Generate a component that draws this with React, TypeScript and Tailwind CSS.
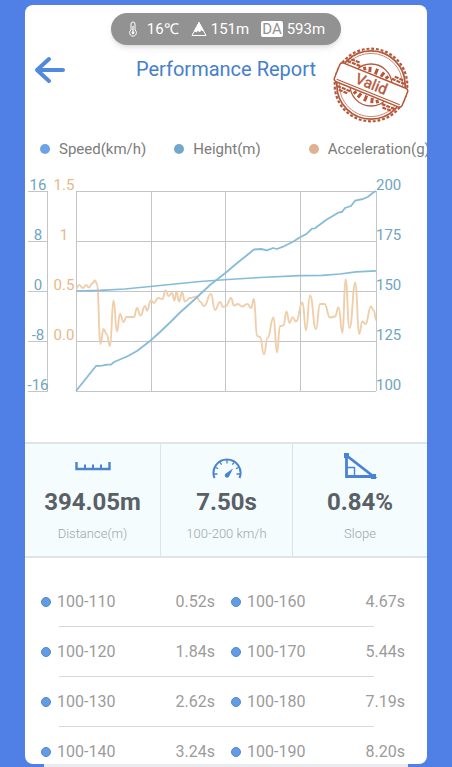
import { Fragment } from 'react';
import { clsx } from 'clsx';

type Point = [number, number];

const speed: Point[] = [
  [0, 200], [20, 175], [26, 174.7], [31, 173.7], [35, 173.7], [38, 171], [51, 165.5], [61, 160],
  [74, 150], [84, 141], [94, 131.5], [104, 121.5], [118, 109], [134, 94], [150, 81.5], [160, 73],
  [170, 65], [178, 58.5], [185, 58], [191, 59.3], [197, 57], [201, 58], [207, 55.7], [217, 50.7],
  [224, 46.3], [230, 43.3], [236, 37.7], [239, 37.3], [250, 29], [263, 21.3], [266, 21], [269, 17],
  [275, 15], [279, 9.7], [287, 8], [292, 5.7], [297, 1.7], [300, 0]
];

const height: Point[] = [
  [0, 100], [24, 99.3], [49, 98], [74, 95.5], [99, 93], [124, 90.5], [152, 88.5], [184, 86.5],
  [224, 84.7], [246, 84.3], [264, 83], [280, 80.8], [300, 79.8]
];

const acceleration: Point[] = [
  [0, 98], [3, 94], [7, 97], [10, 94], [13, 96.5], [16, 92.5], [19, 89.5], [21, 93], [24.5, 153],
  [27.5, 138], [30.5, 143], [34, 155], [37.5, 109.5], [41, 140.5], [44, 123], [47.5, 131],
  [50.5, 126], [58, 126], [61, 117], [64.5, 124.5], [69, 115], [71, 119.5], [75, 109.5], [78, 112],
  [82, 107], [86.5, 108], [89.5, 99.5], [92.5, 105], [96, 102], [98.5, 109.5], [100.5, 100.5],
  [103, 110.5], [106, 101.5], [109, 110.5], [114, 107], [120.5, 105.5], [124, 110.5], [128, 115],
  [135, 103], [139, 119], [144, 111], [147, 116], [150, 115], [155, 107], [158, 114.5], [162, 113],
  [166, 115.5], [171.5, 113], [175, 117], [178, 108], [181, 145], [184, 146], [188, 163.5],
  [191.5, 147], [197.5, 126.5], [201, 161.5], [204, 135], [207.5, 134.5], [210.5, 120.5],
  [213.5, 132], [216.5, 126.5], [220, 130.5], [226.5, 111.5], [230, 139.5], [234, 104.5],
  [240, 138], [244, 113], [248.5, 113], [254, 126.5], [259, 125.5], [262.5, 116.5], [266.5, 142],
  [269.5, 88.5], [273.5, 137], [279.5, 91.5], [283, 143], [286.5, 130.5], [289.5, 133],
  [295, 115.5], [298, 120], [300, 129]
];

const toLine = (points: Point[]) => 'M' + points.map(p => p.join(',')).join('L');

// Flat tangents at every sample, so peaks stay on the measured value
const toCurve = (points: Point[]) =>
  points.reduce((path, [x, y], i) => {
    if (i === 0) return `M${x},${y}`;
    const [px, py] = points[i - 1];
    const mid = (px + x) / 2;
    return `${path}C${mid},${py} ${mid},${y} ${x},${y}`;
  }, '');

const rows = [0, 50, 100, 150, 200];
const columns = [0, 75, 149, 224, 300];
const heightLabels = ['16', '8', '0', '-8', '-16'];
const accelerationLabels = ['1.5', '1', '0.5', '0.0'];
const speedLabels = ['200', '175', '150', '125', '100'];

const legend = [
  { label: 'Speed(km/h)', dot: 'bg-[#6ba3e6]', gap: 'mr-7' },
  { label: 'Height(m)', dot: 'bg-[#72a9cb]', gap: 'mr-12' },
  { label: 'Acceleration(g)', dot: 'bg-[#e0b190]', gap: '' }
];

const splits = [
  [['100-110', '0.52s'], ['100-160', '4.67s']],
  [['100-120', '1.84s'], ['100-170', '5.44s']],
  [['100-130', '2.62s'], ['100-180', '7.19s']],
  [['100-140', '3.24s'], ['100-190', '8.20s']]
];

const ConditionsBar = () => (
  <div className="mx-auto flex h-8 w-fit items-center rounded-full bg-[#929292] px-4 text-[15px] text-white shadow-md">
    <svg viewBox="0 0 12 16" className="mr-2 h-4 w-3" fill="none" stroke="currentColor">
      <path d="M4 9V3a2 2 0 0 1 4 0v6a3.4 3.4 0 1 1-4 0Z" />
      <path d="M6 5v6" strokeWidth="1.2" />
      <circle cx="6" cy="11.8" r="1.4" fill="currentColor" stroke="none" />
    </svg>
    <span>16℃</span>
    <svg viewBox="0 0 16 16" className="mr-1 ml-3 size-4" fill="none" stroke="currentColor">
      <path d="M8 1.5 15 14.5H1Z" />
      <path d="M8 1.5 12.4 10 10 8.6 8.6 11 7 9 5.4 11 3.6 10Z" fill="currentColor" />
    </svg>
    <span>151m</span>
    <span className="mr-1 ml-3 rounded-xs bg-white px-px leading-4 text-[#929292]">DA</span>
    <span>593m</span>
  </div>
);

const ValidStamp = () => (
  <svg viewBox="-38 -38 76 76" className="size-[76px]" fill="none" stroke="#b5573a" role="img" aria-label="Valid">
    <circle r="36.3" strokeWidth="2.2" strokeDasharray="2.9 1.85" />
    <circle r="34.2" strokeWidth="1.7" />
    <circle r="31.6" strokeWidth="0.7" />
    <circle r="21" strokeWidth="1.3" />
    <g transform="rotate(22)">
      <path
        d="M-11-11.5l-2-3M-6-11.5l-1.5-5M0-11.5v-6M6-11.5l1.5-5M11-11.5l2-3M-11 11.5l-2 3M-6 11.5l-1.5 5M0 11.5v6M6 11.5l1.5 5M11 11.5l2 3"
        strokeWidth="3"
      />
      <path d="M-31-13.5h14M-28-16.5h9M17-13.5h14M19-16.5h9M-31 13.5h14M-28 16.5h9M17 13.5h14M19 16.5h9" strokeWidth="2.2" strokeDasharray="4 1" />
      <rect x="-36.5" y="-10" width="73" height="20" rx="3" fill="#fff" strokeWidth="1.5" />
      <path d="M-34 7.5h68" />
      <text y="4" textAnchor="middle" fill="#b5573a" strokeWidth="0.4" className="text-[15px]">
        Valid
      </text>
    </g>
  </svg>
);

const PerformanceChart = () => (
  <svg viewBox="-51 -21 402 250" className="mt-[9px] block w-full text-[15px]" fill="none">
    <g stroke="#c3c5c6">
      {rows.map(y => (
        <path key={y} d={`M0 ${y + 0.5}H300M-48 ${y + 0.5}H-29`} />
      ))}
      {columns.map(x => (
        <path key={x} d={`M${x + 0.5} 0V200`} />
      ))}
      <path d="M-28.5 0V201" />
    </g>
    <path d={toCurve(acceleration)} stroke="#efceaa" strokeWidth="1.9" />
    <path d={toLine(height)} stroke="#86bcd8" strokeWidth="1.7" />
    <path d={toLine(speed)} stroke="#86bcd8" strokeWidth="1.8" strokeLinejoin="round" />
    <g fill="#6fa5c0">
      {heightLabels.map((label, i) => (
        <text key={label} x="-38" y={rows[i] - 1} textAnchor="middle">{label}</text>
      ))}
      {speedLabels.map((label, i) => (
        <text key={label} x="300" y={rows[i] - 1}>{label}</text>
      ))}
    </g>
    <g fill="#ebb786">
      {accelerationLabels.map((label, i) => (
        <text key={label} x="-12" y={rows[i] - 1} textAnchor="middle">{label}</text>
      ))}
    </g>
  </svg>
);

const RulerIcon = () => (
  <svg viewBox="0 0 36 28" className="h-7 w-9" fill="none" stroke="#4a83cf">
    <path d="M1.5 10v7h33v-7" strokeWidth="2.4" />
    <path d="M10 12.5V17M18 12.5V17M26 12.5V17" strokeWidth="2" />
  </svg>
);

const GaugeIcon = () => (
  <svg viewBox="0 0 32 28" className="h-7 w-8" fill="none" stroke="#4a83cf">
    <path d="M3.5 26A13.5 13.5 0 1 1 28.5 26" strokeWidth="2" />
    <path d="M16 8v3.5M9 10.5l1.6 2.2M23 10.5l-1.6 2.2M4.5 15.5l2.6 1.2M27.5 15.5l-2.6 1.2M3 22h3.5M29 22h-3.5" strokeWidth="1.3" />
    <path d="M22 16.5 18.3 24A2.3 2.3 0 1 1 15.2 21.2Z" fill="#4a83cf" stroke="none" />
  </svg>
);

const SlopeIcon = () => (
  <svg viewBox="0 0 34 28" className="h-7 w-[34px]" fill="none" stroke="#4a83d6">
    <path d="M3.5 3.5V24.5H30.5Z" strokeWidth="2.8" />
    <path d="M4 15.5h7.5V24" strokeWidth="1.4" />
    <path d="M1 1h5v5H1ZM28 22h5v5h-5Z" fill="#4a83d6" stroke="none" />
  </svg>
);

const stats = [
  { icon: <RulerIcon />, value: '394.05m', label: 'Distance(m)' },
  { icon: <GaugeIcon />, value: '7.50s', label: '100-200 km/h' },
  { icon: <SlopeIcon />, value: '0.84%', label: 'Slope' }
];

const SplitTable = () => (
  <table className="w-full table-fixed text-base leading-6 text-[#9b9b9b]">
    <tbody>
      {splits.map((pairs, i) => (
        <Fragment key={pairs[0][0]}>
          {i > 0 && (
            <tr aria-hidden="true">
              <td colSpan={4} className="pt-3 pr-[31px] pb-[13px] pl-[34px]">
                <div className="h-px bg-[#d9d9d9]" />
              </td>
            </tr>
          )}
          <tr>
            {pairs.map(([range, time]) => (
              <Fragment key={range}>
                <th scope="row" className="pl-4 text-left font-normal whitespace-nowrap">
                  <span className="mr-[6px] inline-block size-[10px] rounded-full border border-[#5088cc] bg-[#639be4]" />
                  {range}
                </th>
                <td className="text-right">{time}</td>
              </Fragment>
            ))}
          </tr>
        </Fragment>
      ))}
    </tbody>
  </table>
);

export default function App() {
  return (
    <div className="min-h-screen bg-[#5080e6] px-[25px] pt-[5px] font-['Roboto',sans-serif]">
      <main className="overflow-hidden rounded-lg bg-white pt-2">
        <ConditionsBar />

        <header className="mt-[2px] grid grid-cols-[1fr_auto_1fr] items-start">
          <button type="button" aria-label="Back" className="mt-[9px] ml-[9px] w-8">
            <svg viewBox="0 0 32 28" className="block" fill="none" stroke="#5189de" strokeWidth="4" strokeLinecap="round" strokeLinejoin="round">
              <path d="M15 3 3 14 15 25M3 14H29" />
            </svg>
          </button>
          <h1 className="mt-2 text-xl leading-7 text-[#4580cb]">Performance Report</h1>
          <div className="mr-[18px] justify-self-end">
            <ValidStamp />
          </div>
        </header>

        <ul className="mt-[14px] flex overflow-hidden pl-[15px] text-[15px] leading-6 whitespace-nowrap text-[#7c7c7c]">
          {legend.map(({ label, dot, gap }) => (
            <li key={label} className={clsx('flex shrink-0 items-center', gap)}>
              <span className={clsx('mr-[9px] size-[10px] rounded-full', dot)} />
              {label}
            </li>
          ))}
        </ul>

        <PerformanceChart />

        <section className="mt-[22px] grid grid-cols-[136fr_132fr_134fr] divide-x divide-[#dce5e9] border-y-2 border-[#dce5e9] bg-[#f5fcfe]">
          {stats.map(({ icon, value, label }) => (
            <div key={label} className="flex flex-col items-center gap-[6px] pt-2 pb-3">
              {icon}
              <p className="text-2xl leading-8 font-bold text-[#596066]">{value}</p>
              <p className="text-[13px] leading-5 font-light text-[#a0a5a8]">{label}</p>
            </div>
          ))}
        </section>

        <div className="mt-8 pr-[22px]">
          <SplitTable />
        </div>
      </main>
      <div className="mx-[19px] h-[3px] bg-[#eaebee]" />
    </div>
  );
}
